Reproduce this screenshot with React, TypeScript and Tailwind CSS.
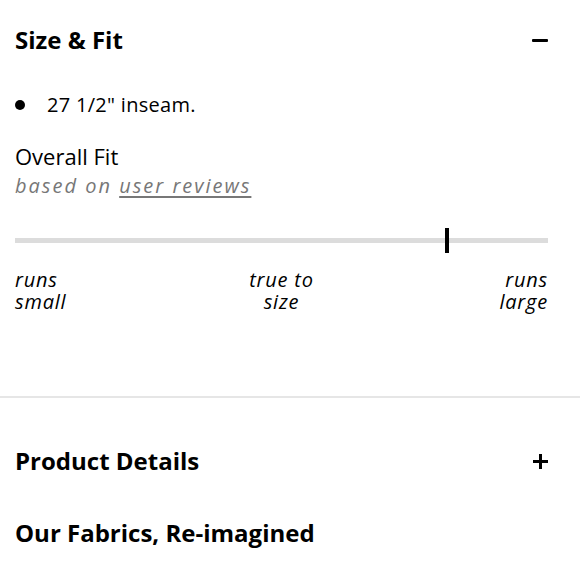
function Minus() {
  return <span className="block h-[3px] w-[16px] rounded-[1px] bg-black" />;
}

function Plus() {
  return (
    <span className="relative block h-[15px] w-[15px]">
      <span className="absolute left-0 top-[6px] h-[3px] w-[15px] bg-black" />
      <span className="absolute left-[6px] top-0 h-[15px] w-[3px] bg-black" />
    </span>
  );
}

export default function App() {
  return (
    <div className="h-[580px] w-[580px] overflow-hidden bg-white text-black font-['Open_Sans','Noto_Sans',sans-serif]">
      <section className="pl-[15px] pr-[32px] pt-[26px]">
        <div className="flex items-center justify-between">
          <h2 className="text-[24px] font-bold leading-[28px]">Size &amp; Fit</h2>
          <Minus />
        </div>

        <ul className="mt-[39px]">
          <li className="flex items-center text-[20px] leading-[24px] tracking-[0.3px]">
            <span className="mr-[22px] h-[10px] w-[10px] rounded-full bg-black" />
            27 1/2" inseam.
          </li>
        </ul>

        <div className="mt-[25px] text-[22px] leading-[28px]">Overall Fit</div>
        <div className="mt-[4px] text-[20px] italic leading-[24px] tracking-[2px] text-[#777]">
          based on <span className="underline underline-offset-[3px]">user reviews</span>
        </div>

        <div className="relative mt-[30px] h-[25px]">
          <div className="absolute left-0 right-0 top-[10px] h-[5px] bg-[#dcdcdc]" />
          <div className="absolute left-[430px] top-0 h-[25px] w-[4px] bg-black" />
        </div>

        <div className="mt-[16px] grid grid-cols-3 text-[20px] italic leading-[22px] tracking-[0.8px]">
          <div className="text-left">runs<br />small</div>
          <div className="text-center">true to<br />size</div>
          <div className="text-right">runs<br />large</div>
        </div>
      </section>

      <div className="mt-[83px] h-[2px] bg-[#e6e6e6]" />

      <section className="pl-[15px] pr-[32px]">
        <div className="mt-[49px] flex items-center justify-between">
          <h2 className="text-[24px] font-bold leading-[28px]">Product Details</h2>
          <Plus />
        </div>
        <h2 className="mt-[44px] text-[24px] font-bold leading-[28px]">
          Our Fabrics, Re-imagined
        </h2>
      </section>
    </div>
  );
}
